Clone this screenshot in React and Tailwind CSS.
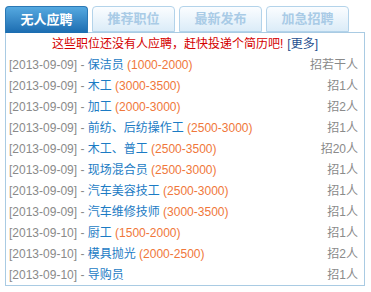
import React from "react";

const tabs = ["无人应聘", "推荐职位", "最新发布", "加急招聘"];

const jobs = [
  { date: "2013-09-09", name: "保洁员", pay: "1000-2000", count: "招若干人" },
  { date: "2013-09-09", name: "木工", pay: "3000-3500", count: "招1人" },
  { date: "2013-09-09", name: "加工", pay: "2000-3000", count: "招2人" },
  { date: "2013-09-09", name: "前纺、后纺操作工", pay: "2500-3000", count: "招1人" },
  { date: "2013-09-09", name: "木工、普工", pay: "2500-3500", count: "招20人" },
  { date: "2013-09-09", name: "现场混合员", pay: "2500-3000", count: "招1人" },
  { date: "2013-09-09", name: "汽车美容技工", pay: "2500-3000", count: "招1人" },
  { date: "2013-09-09", name: "汽车维修技师", pay: "3000-3500", count: "招1人" },
  { date: "2013-09-10", name: "厨工", pay: "1500-2000", count: "招1人" },
  { date: "2013-09-10", name: "模具抛光", pay: "2000-2500", count: "招2人" },
  { date: "2013-09-10", name: "导购员", pay: "", count: "招1人" },
];

export default function App() {
  return (
    <div
      className="w-[371px] h-[292px] bg-white pt-[6px] pl-[5px]"
      style={{ fontFamily: '"Liberation Sans", "Noto Sans CJK SC", sans-serif' }}
    >
      {/* Tabs */}
      <div className="flex gap-[4px] relative z-10 -mb-px">
        {tabs.map((t, i) =>
          i === 0 ? (
            <div
              key={t}
              className="w-[83px] h-[27px] rounded-t-[4px] border border-b-0 border-[#2a78b5] bg-gradient-to-b from-[#55a9e0] to-[#1a6cb0] text-white text-[13px] font-bold flex items-center justify-center"
            >
              {t}
            </div>
          ) : (
            <div
              key={t}
              className="w-[83px] h-[26px] rounded-t-[4px] border border-[#b3d3ea] bg-gradient-to-b from-[#fbfdff] to-[#dbecf8] text-[#a9cbe6] text-[13px] font-bold flex items-center justify-center"
            >
              {t}
            </div>
          )
        )}
      </div>

      {/* Box */}
      <div className="w-[360px] border border-[#a9cbe3] bg-white">
        <div className="h-[21px] flex items-center justify-center text-[12px] leading-none">
          <span className="text-[#d40000]">这些职位还没有人应聘，赶快投递个简历吧!</span>
          <span className="text-[#1f4f8f] ml-[4px]">[更多]</span>
        </div>
        {jobs.map((j, i) => (
          <div key={i} className="h-[21px] flex items-center justify-between pl-[3px] pr-[6px] text-[12px] leading-none">
            <div className="whitespace-nowrap">
              <span className="text-[#8a8a8a]">[{j.date}] - </span>
              <span className="text-[#1b7bc4]">{j.name}</span>
              {j.pay && <span className="text-[#f0773a]"> ({j.pay})</span>}
            </div>
            <span className="text-[#8a8a8a] whitespace-nowrap">{j.count}</span>
          </div>
        ))}
      </div>
    </div>
  );
}
